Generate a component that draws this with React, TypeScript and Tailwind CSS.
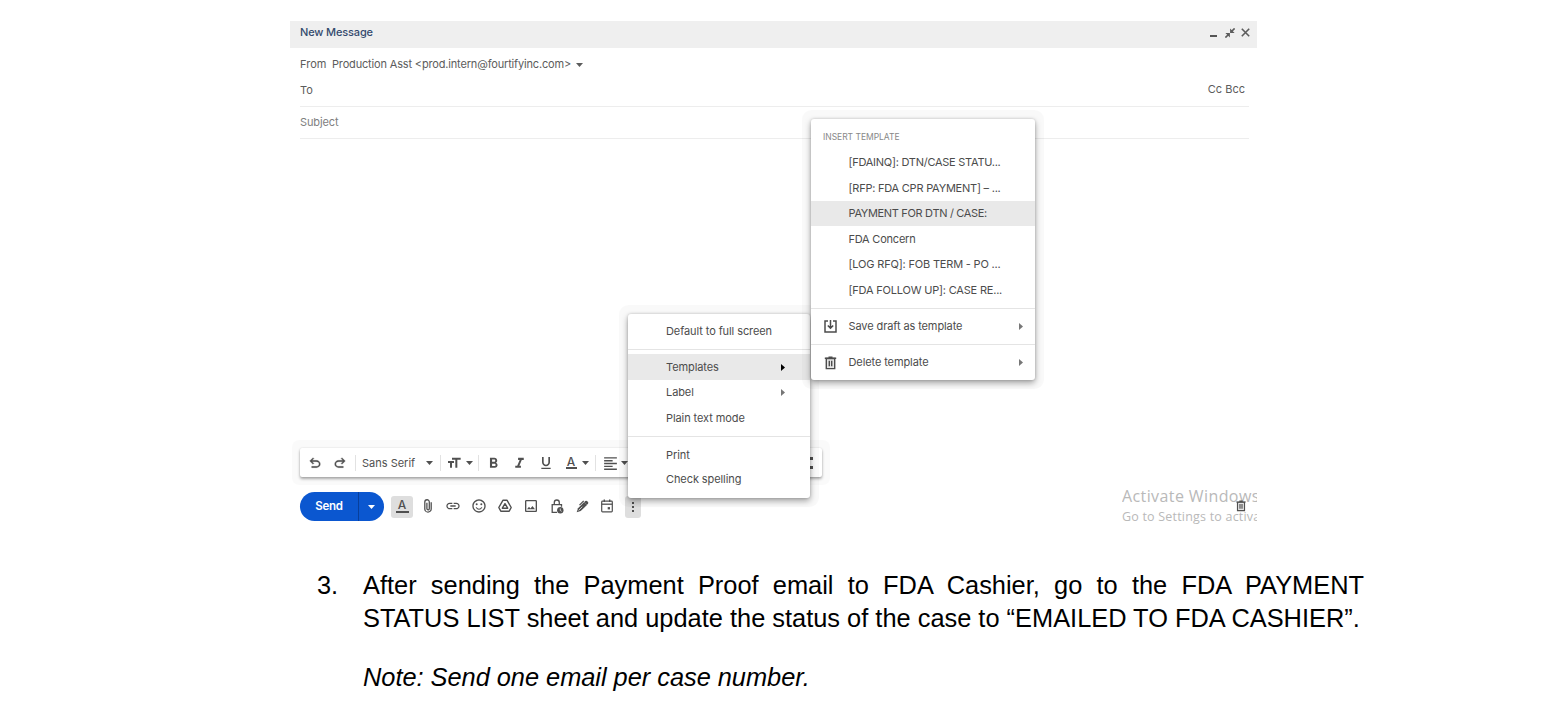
import type { ReactNode } from "react";
import {
  MdFormatAlignLeft,
  MdFormatBold,
  MdFormatItalic,
  MdFormatUnderlined,
  MdFormatSize,
  MdLink,
  MdOutlineImage,
  MdOutlineSentimentSatisfiedAlt,
} from "react-icons/md";

function CaretDown({ className = "" }: { className?: string }) {
  return (
    <svg className={`h-[4px] w-[7px] shrink-0 ${className}`} viewBox="0 0 7 4" fill="currentColor">
      <path d="M0 0h7L3.5 4z" />
    </svg>
  );
}

function CaretRight({ className = "" }: { className?: string }) {
  return (
    <svg className={`h-[7px] w-[4px] shrink-0 ${className}`} viewBox="0 0 4 7" fill="currentColor">
      <path d="M0 0v7l4-3.5z" />
    </svg>
  );
}

function UndoIcon({ className = "" }: { className?: string }) {
  return (
    <svg className={`size-[16px] shrink-0 ${className}`} viewBox="0 -960 960 960" fill="currentColor">
      <path d="M280-200v-80h284q63 0 109.500-40T720-420q0-60-46.500-100T564-560H312l104 104-56 56-200-200 200-200 56 56-104 104h252q97 0 166.500 63T800-420q0 94-69.500 157T564-200H280Z" stroke="currentColor" strokeWidth="16" />
    </svg>
  );
}

function TrashIcon({ className = "" }: { className?: string }) {
  return (
    <svg className={`shrink-0 ${className}`} viewBox="0 0 12 14" fill="none" stroke="currentColor" strokeWidth="1.400">
      <path d="M1.800 2.500h8.400V12.600H1.800z" fill="currentColor" fillOpacity=".15" />
      <path d="M.3 2.200h11.400M4 1.200h4M4.800 4.700v5.600M7.200 4.700v5.600" />
    </svg>
  );
}

function SaveIcon() {
  return (
    <svg className="size-[13px]" viewBox="0 0 13 13" fill="none" stroke="currentColor" strokeWidth="1.500">
      <path d="M4 1H1v11h11V1H9M6.500 0v8M3.800 5.500l2.700 2.700 2.700-2.700" />
    </svg>
  );
}

function ClipIcon() {
  return (
    <svg className="h-[14px] w-[8px]" viewBox="0 0 8 14" fill="none" stroke="currentColor" strokeWidth="1.300">
      <path d="M7.200 3.200v6.700a3.200 3.200 0 0 1-6.400 0V3a2.200 2.200 0 0 1 4.500 0v6.600a1.200 1.200 0 0 1-2.400 0V3.700" />
    </svg>
  );
}

function DriveIcon() {
  return (
    <svg className="size-[14px]" viewBox="0 0 14 14" fill="none" stroke="currentColor" strokeWidth="1.400" strokeLinejoin="round">
      <path d="M4.900 1.300h4.200l4.100 7.200-2 3.700H2.800L.8 8.500z" />
      <path d="M7 4.700 4.300 9.200h5.400z" />
    </svg>
  );
}

function LockClockIcon() {
  return (
    <svg className="h-[15px] w-[13px]" viewBox="0 0 13 15" fill="none" stroke="currentColor" strokeWidth="1.300">
      <path d="M6 13.300H1.200V5.700h9.300v2M3.300 5.700V3.500a2.500 2.500 0 0 1 5 0v2.200" />
      <circle cx="9.300" cy="11.300" r="3.200" fill="currentColor" stroke="none" />
      <path d="M9.300 9.500v2l1.300.8" stroke="#fff" strokeWidth=".7" />
    </svg>
  );
}

function PenIcon() {
  return (
    <svg className="size-[13px]" viewBox="0 0 13 13" fill="currentColor">
      <path d="M.7 12.300 2 8.300 8.200 2.100l2.800 2.800-6.300 6.200z" />
      <path d="m8.300 2 1-1q.9-.7 1.700.1l1 1q.6.800 0 1.600l-1.200 1.200z" />
      <path d="M7.700.9 3.500 5.100" fill="none" stroke="currentColor" strokeWidth="1.300" />
      <path d="m2.600 10.400 3.700-3.700" stroke="#fff" strokeWidth=".7" />
    </svg>
  );
}

function CalendarIcon() {
  return (
    <svg className="h-[14px] w-[12px]" viewBox="0 0 12 14" fill="none" stroke="currentColor" strokeWidth="1.200">
      <rect x=".7" y="2.200" width="10.600" height="10.600" rx=".8" />
      <path d="M.7 5.200h10.600" strokeWidth="1.300" />
      <path d="M3.300.5v2.500M8.700.5v2.500" strokeWidth="1.400" />
      <path d="M6.700 8.100h2.300v2.300H6.700z" fill="currentColor" stroke="none" />
    </svg>
  );
}

function ShrinkIcon() {
  return (
    <svg className="size-[10px]" viewBox="0 0 10 10" fill="none" stroke="currentColor" strokeWidth="1.600">
      <path d="M9.600.4 6.200 3.800M.4 9.600l3.400-3.400" />
      <path d="M5.100.4v4.500h4.500zM.4 5.100h4.500v4.500z" fill="currentColor" stroke="none" />
    </svg>
  );
}

function LetterA({ children }: { children?: ReactNode }) {
  return (
    <span className="flex flex-col items-center">
      <span className="text-[12px] font-medium leading-[10px]">A</span>
      {children}
    </span>
  );
}

function Slot({ children, className = "" }: { children: ReactNode; className?: string }) {
  return <span className={`flex shrink-0 items-center justify-center ${className}`}>{children}</span>;
}

const templates = [
  { name: "[FDAINQ]: DTN/CASE STATU...", style: "h-[26px] tracking-[-0.26px]" },
  { name: "[RFP: FDA CPR PAYMENT] – ...", style: "h-[26px] tracking-[-0.23px]" },
  { name: "PAYMENT FOR DTN / CASE:", style: "h-[25px] bg-[#e9e9e9] tracking-[-0.33px]" },
  { name: "FDA Concern", style: "h-[26px] tracking-[-0.22px]" },
  { name: "[LOG RFQ]: FOB TERM - PO ...", style: "h-[25px] tracking-[-0.18px]" },
  { name: "[FDA FOLLOW UP]: CASE RE...", style: "h-[26px] tracking-[-0.2px]" },
];

function TemplateMenu() {
  return (
    <div className="absolute left-[520.500px] top-[98px] h-[261px] w-[224px] rounded-[3px] bg-white pt-[8px] tracking-[-0.1px] text-[#4c4c4c] shadow-[0_3px_6px_rgba(0,0,0,0.350),0_0_3px_rgba(0,0,0,0.180),0_0_0_9px_rgba(0,0,0,0.022)]">
      <div className="h-[22px] pl-[12.500px] text-[8.500px] leading-[20px] tracking-[-0.02px] text-[#888]">INSERT TEMPLATE</div>
      {templates.map((t) => (
        <div key={t.name} className={`flex items-center whitespace-nowrap pl-[38px] ${t.style}`}>
          {t.name}
        </div>
      ))}
      <div className="mt-[5px] flex h-[36px] items-center border-t border-[#e4e4e4] pl-[13.500px] pr-[12px]">
        <SaveIcon />
        <span className="ml-[11.500px] flex-1">Save draft as template</span>
        <CaretRight className="text-[#777]" />
      </div>
      <div className="flex h-[36px] items-center border-t border-[#e4e4e4] pl-[13.500px] pr-[12px]">
        <TrashIcon className="h-[14px] w-[13px]" />
        <span className="ml-[11.500px] flex-1">Delete template</span>
        <CaretRight className="text-[#777]" />
      </div>
    </div>
  );
}

function OptionsMenu() {
  return (
    <div className="absolute left-[338px] top-[293px] h-[184px] w-[182px] rounded-[3px] bg-white tracking-[-0.09px] text-[#4c4c4c] shadow-[0_3px_6px_rgba(0,0,0,0.350),0_0_3px_rgba(0,0,0,0.180),0_0_0_9px_rgba(0,0,0,0.022)]">
      <div className="flex h-[36px] items-center border-b border-[#e4e4e4] pl-[38px]">Default to full screen</div>
      <div className="mt-[4px] flex h-[26px] items-center justify-between bg-[#e9e9e9] pl-[38px] pr-[25px]">
        Templates
        <CaretRight className="text-black" />
      </div>
      <div className="flex h-[25px] items-center justify-between pl-[38px] pr-[25px]">
        Label
        <CaretRight className="text-[#777]" />
      </div>
      <div className="flex h-[26px] items-center pl-[38px]">Plain text mode</div>
      <div className="mt-[5px] flex h-[31px] items-center border-t border-[#e4e4e4] pl-[38px] pt-[6px]">Print</div>
      <div className="flex h-[25px] items-center pl-[38px]">Check spelling</div>
    </div>
  );
}

function FormatBar() {
  return (
    <div className="ml-[10px] flex h-[29px] w-[522px] items-center rounded-[2px] bg-white pt-px text-[#505050] shadow-[0_2px_3px_rgba(0,0,0,0.320),0_0_2px_rgba(0,0,0,0.120),0_0_0_8px_rgba(0,0,0,0.018)]">
      <Slot className="ml-[7px] w-[16px]"><UndoIcon /></Slot>
      <Slot className="ml-[9px] w-[16px]"><UndoIcon className="-scale-x-100" /></Slot>
      <span className="ml-[7px] h-[16px] w-px bg-[#e2e2e2]" />
      <span className="ml-[6px] w-[64px]">Sans Serif</span>
      <CaretDown />
      <span className="ml-[7px] h-[16px] w-px bg-[#e2e2e2]" />
      <Slot className="ml-[5px] w-[16px]"><MdFormatSize className="size-[18px]" /></Slot>
      <CaretDown className="ml-[4px]" />
      <span className="ml-[5px] h-[16px] w-px bg-[#e2e2e2]" />
      <Slot className="ml-[6px] w-[17px]"><MdFormatBold className="size-[19px]" /></Slot>
      <Slot className="ml-[9px] w-[17px]"><MdFormatItalic className="size-[19px]" /></Slot>
      <Slot className="ml-[9px] w-[17px]"><MdFormatUnderlined className="size-[16px]" /></Slot>
      <Slot className="ml-[11px] w-[12px]">
        <LetterA><span className="h-[1.500px] w-[11px] bg-current" /></LetterA>
      </Slot>
      <CaretDown className="ml-[5px]" />
      <span className="ml-[6px] h-[16px] w-px bg-[#e2e2e2]" />
      <Slot className="ml-[6px] w-[17px]"><MdFormatAlignLeft className="size-[17px]" /></Slot>
      <CaretDown className="ml-[2px]" />
      <span className="ml-auto mr-[9px] flex flex-col gap-[6px]">
        <span className="size-[3px] bg-current" />
        <span className="size-[3px] bg-current" />
      </span>
    </div>
  );
}

function ActionBar() {
  return (
    <div className="mt-[15px] flex h-[29px] items-center pl-[10px] text-[#505050]">
      <div className="flex h-[29px] w-[84px] overflow-hidden rounded-full bg-[#0b57d0] text-white">
        <span className="flex w-[59px] items-center justify-center border-r border-[#083f9b] text-[11.500px] font-semibold tracking-[-0.200px]">Send</span>
        <span className="flex flex-1 items-center justify-center"><CaretDown /></span>
      </div>
      <Slot className="ml-[7px] h-[22px] w-[22px] rounded-[3px] bg-[#dedede]">
        <LetterA><span className="mt-px h-[2px] w-[13px] bg-current" /></LetterA>
      </Slot>
      <div className="-mt-px flex items-center">
        <Slot className="ml-[7px] w-[16px]"><ClipIcon /></Slot>
        <Slot className="ml-[9px] w-[16px]"><MdLink className="size-[16px]" /></Slot>
        <Slot className="ml-[10px] w-[16px]"><MdOutlineSentimentSatisfiedAlt className="size-[16px]" /></Slot>
        <Slot className="ml-[10px] w-[16px]"><DriveIcon /></Slot>
        <Slot className="ml-[10px] w-[16px]"><MdOutlineImage className="size-[16px]" /></Slot>
        <Slot className="ml-[10px] w-[16px]"><LockClockIcon /></Slot>
        <Slot className="ml-[9px] w-[16px]"><PenIcon /></Slot>
        <Slot className="ml-[9px] w-[16px]"><CalendarIcon /></Slot>
      </div>
      <Slot className="ml-[10px] h-[22px] w-[16px] rounded-[3px] bg-[#dedede]">
        <span className="flex flex-col gap-[2px]">
          <span className="size-[2px] bg-current" />
          <span className="size-[2px] bg-current" />
          <span className="size-[2px] bg-current" />
        </span>
      </Slot>
      <div className="relative -top-px ml-auto w-[135px] overflow-hidden whitespace-nowrap font-['Open_Sans',sans-serif] text-[#b9b9b9]">
        <div className="text-[16px] leading-[21px] tracking-[0.400px]">Activate Windows</div>
        <div className="text-[12.500px] leading-[19px] tracking-[0.200px]">Go to Settings to activate Windows.</div>
        <TrashIcon className="absolute left-[114px] top-[14px] h-[12px] w-[10px] text-[#505050]" />
      </div>
    </div>
  );
}

function Composer() {
  return (
    <section className="relative ml-[290px] flex h-[518px] w-[967px] flex-col font-['Inter',sans-serif] text-[11px] text-[#5c5c5c]">
      <header className="flex h-[27px] items-center bg-[#efefef] pb-[4px] pl-[10px] pr-[7px]">
        <h1 className="flex-1 font-medium tracking-[-0.150px] text-[#344a6e]">New Message</h1>
        <span className="mt-[7px] h-[2px] w-[7px] bg-[#555]" />
        <span className="ml-[8px]"><ShrinkIcon /></span>
        <svg className="ml-[6px] size-[9px]" viewBox="0 0 9 9" stroke="currentColor" strokeWidth="1.600">
          <path d="m.8.8 7.400 7.400M8.200.8.800 8.200" />
        </svg>
      </header>
      <div className="flex h-[33px] items-center pl-[10px]">
        <span className="w-[32px]">From</span>
        <span className="tracking-[-0.165px]">Production Asst &lt;prod.intern@fourtifyinc.com&gt;</span>
        <CaretDown className="ml-[5px]" />
      </div>
      <div className="ml-[10px] mr-[8px] flex h-[26px] items-center justify-between border-b border-[#ededed] pb-[7px] pr-[4px]">
        <span className="pt-px">To</span>
        <span className="pb-px">Cc Bcc</span>
      </div>
      <div className="ml-[10px] mr-[8px] flex h-[32px] items-center border-b border-[#ededed] tracking-[-0.1px] text-[#808080]">Subject</div>
      <div className="h-[309px]" />
      <FormatBar />
      <ActionBar />
      <OptionsMenu />
      <TemplateMenu />
    </section>
  );
}

export default function App() {
  return (
    <main className="h-[727px] w-full overflow-hidden bg-white pt-[21px]">
      <Composer />
      <article className="ml-[317px] mt-[30px] flex w-[1047px] font-['Liberation_Sans',Arial,sans-serif] text-[25.400px] leading-[33px] text-black">
        <span className="w-[46px] shrink-0">3.</span>
        <div className="min-w-0 flex-1 whitespace-nowrap">
          <p className="[text-align-last:justify]">After sending the Payment Proof email to FDA Cashier, go to the FDA PAYMENT</p>
          <p>STATUS LIST sheet and update the status of the case to “EMAILED TO FDA CASHIER”.</p>
          <p className="mt-[26px] italic tracking-[-0.03px]">Note: Send one email per case number.</p>
        </div>
      </article>
    </main>
  );
}
